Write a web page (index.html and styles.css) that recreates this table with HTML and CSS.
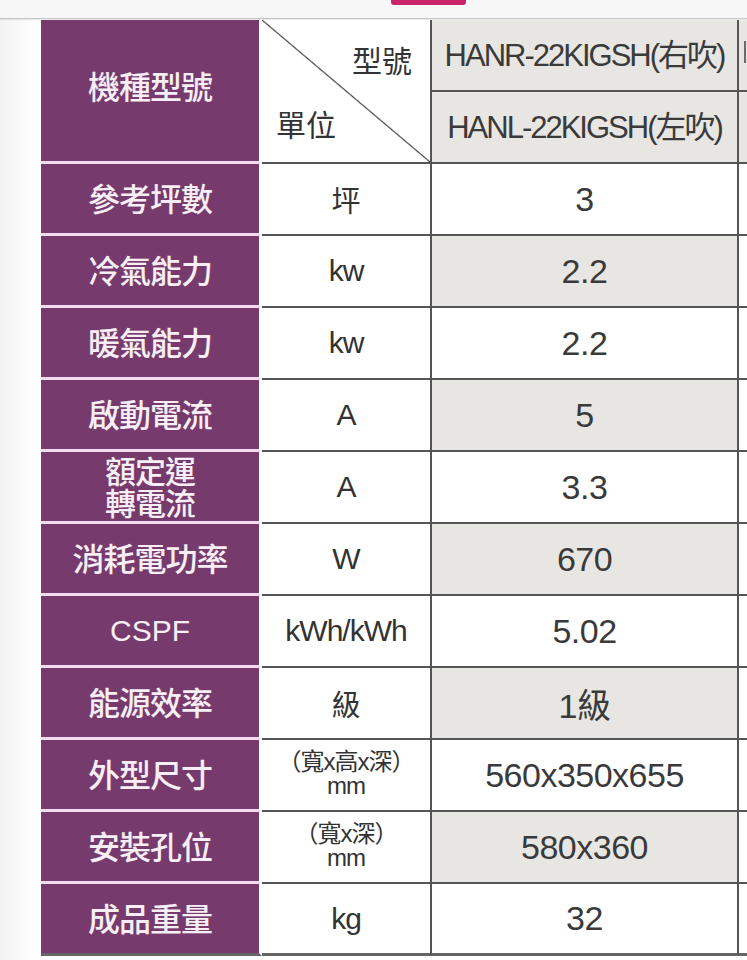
FILE: index.html
```html
<!DOCTYPE html>
<html lang="zh-Hant">
<head>
<meta charset="utf-8">
<title>規格表</title>
<link rel="stylesheet" href="styles.css">
</head>
<body>
<div class="topbar"><span class="badge"></span></div>
<div class="spec">
  <div class="label head">機種型號</div>
  <div class="diag"><span class="d-top">型號</span><span class="d-bot">單位</span></div>
  <div class="val gray model">HANR-22KIGSH(右吹)</div>
  <div class="val gray next"><span class="sliver"></span></div>
  <div class="val gray model">HANL-22KIGSH(左吹)</div>
  <div class="val gray next"></div>

  <div class="label">參考坪數</div><div class="unit cjk">坪</div><div class="val">3</div><div class="val next"></div>
  <div class="label">冷氣能力</div><div class="unit">kw</div><div class="val gray">2.2</div><div class="val next"></div>
  <div class="label">暖氣能力</div><div class="unit">kw</div><div class="val">2.2</div><div class="val next"></div>
  <div class="label">啟動電流</div><div class="unit">A</div><div class="val gray">5</div><div class="val next"></div>
  <div class="label two"><span>額定運</span><span>轉電流</span></div><div class="unit">A</div><div class="val">3.3</div><div class="val next"></div>
  <div class="label">消耗電功率</div><div class="unit">W</div><div class="val gray">670</div><div class="val next"></div>
  <div class="label latin">CSPF</div><div class="unit">kWh/kWh</div><div class="val">5.02</div><div class="val next"></div>
  <div class="label">能源效率</div><div class="unit cjk">級</div><div class="val gray">1級</div><div class="val next"></div>
  <div class="label">外型尺寸</div><div class="unit dim"><span>（寬x高x深）</span><span>mm</span></div><div class="val">560x350x655</div><div class="val next"></div>
  <div class="label">安裝孔位</div><div class="unit dim"><span>（寬x深）</span><span>mm</span></div><div class="val gray">580x360</div><div class="val next"></div>
  <div class="label last">成品重量</div><div class="unit last">kg</div><div class="val last">32</div><div class="val next last"></div>
</div>
</body>
</html>
```

FILE: styles.css
```css
html, body {
  margin: 0;
  padding: 0;
  background: #ffffff;
  overflow: hidden;
}

body {
  width: 747px;
  height: 960px;
  font-family: "Liberation Sans", "Noto Sans CJK TC", sans-serif;
  background: linear-gradient(to right, #f3f3f3 0px, #ffffff 38px);
}

.topbar {
  height: 18px;
  background: #f7f7f7;
  border-bottom: 1px solid #c6c6c6;
  box-shadow: 0 1px 1px rgba(0,0,0,0.08);
}

.badge {
  display: block;
  width: 75px;
  height: 5px;
  margin-left: 391px;
  background: #c8236b;
  border-radius: 0 0 3px 3px;
}

.spec {
  margin-top: 1px;
  margin-left: 41px;
  display: grid;
  grid-template-columns: 221px 170px 307px 60px;
  grid-auto-rows: 72px;
  width: 758px;
}

.spec > div {
  box-sizing: border-box;
  display: flex;
  align-items: center;
  justify-content: center;
  text-align: center;
}

.label {
  background: #763b6c;
  color: #f7eef6;
  border-right: 3px solid #ffffff;
  border-bottom: 3px solid #f3dcef;
  font-family: "Noto Sans CJK TC", sans-serif;
  font-weight: 500;
  font-size: 32px;
  letter-spacing: -1px;
  padding-bottom: 4px;
}

.label.head {
  grid-row: span 2;
  padding-bottom: 12px;
}

.spec > .label.two {
  flex-direction: column;
  font-size: 31px;
  line-height: 32px;
  padding-bottom: 2px;
}

.label.latin {
  font-family: "Liberation Sans", sans-serif;
  font-weight: normal;
  font-size: 30px;
  letter-spacing: 0;
  padding-bottom: 0;
}

.diag {
  grid-row: span 2;
  position: relative;
  background: linear-gradient(to top right, transparent calc(50% - 1.2px), #4a4a4a 50%, transparent calc(50% + 1.2px)) #ffffff;
  border-right: 2px solid #555555;
  border-bottom: 2px solid #555555;
  color: #333333;
  font-family: "Noto Sans CJK TC", sans-serif;
  font-size: 30px;
}

.d-top {
  position: absolute;
  top: 17px;
  right: 18px;
}

.d-bot {
  position: absolute;
  left: 14px;
  top: 81px;
}

.unit {
  background: #ffffff;
  color: #333333;
  border-right: 2px solid #555555;
  border-bottom: 2px solid #555555;
  font-size: 30px;
  letter-spacing: -1px;
}

.unit.cjk {
  font-family: "Noto Sans CJK TC", sans-serif;
  font-size: 29px;
  letter-spacing: 0;
}

.spec > .unit.dim {
  flex-direction: column;
  font-size: 24px;
  line-height: 24px;
  letter-spacing: -1px;
  padding-bottom: 2px;
}

.val {
  background: #ffffff;
  color: #3a3a3a;
  border-right: 2px solid #555555;
  border-bottom: 2px solid #555555;
  font-size: 34px;
  letter-spacing: -0.5px;
}

.val.gray {
  background: #e8e6e3;
}

.val.model {
  font-size: 31px;
  letter-spacing: -2px;
  white-space: nowrap;
  padding-bottom: 6px;
}

.spec > .val.next {
  border-right: none;
  justify-content: flex-start;
  padding-left: 5px;
  padding-bottom: 6px;
}

.sliver {
  display: block;
  width: 2px;
  height: 22px;
  background: #6a6a6a;
}

.last {
  border-bottom: 3px solid #666666;
}

.spec > .label.last {
  border-bottom: 3px solid #666666;
}
```
